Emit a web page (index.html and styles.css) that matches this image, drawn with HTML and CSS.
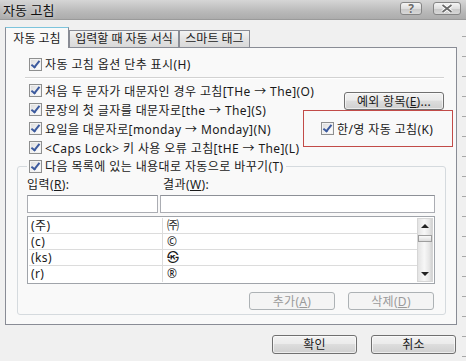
FILE: index.html
```html
<!DOCTYPE html>
<html lang="ko">
<head>
    <meta charset="UTF-8">
    <title>자동 고침</title>
    <link rel="stylesheet" href="styles.css">
</head>
<body>
<div class="window">
    <div class="titlebar">
        <span class="title">자동 고침</span>
        <div class="title-buttons">
            <span class="tb-btn tb-help">?</span>
            <span class="tb-btn tb-close">
                <svg width="12" height="9" viewBox="0 0 12 9"><path d="M1.5 1 L10.5 8 M10.5 1 L1.5 8" stroke="#fff" stroke-width="3.6"/><path d="M1.5 1 L10.5 8 M10.5 1 L1.5 8" stroke="#6a6a6a" stroke-width="1.8"/></svg>
            </span>
        </div>
    </div>

    <div class="frame">
        <div class="dialog">
            <div class="tabs">
                <div class="tab tab-1 active">자동 고침</div>
                <div class="tab tab-2">입력할 때 자동 서식</div>
                <div class="tab tab-3">스마트 태그</div>
            </div>

            <div class="panel">
                <div class="row top-row"><span class="cb"></span>자동 고침 옵션 단추 표시(H)</div>
                <div class="sep"></div>

                <div class="upper">
                    <div class="rows">
                        <div class="row"><span class="cb"></span>처음 두 문자가 대문자인 경우 고침[THe → The](O)</div>
                        <div class="row"><span class="cb"></span>문장의 첫 글자를 대문자로[the → The](S)</div>
                        <div class="row"><span class="cb"></span>요일을 대문자로[monday → Monday](N)</div>
                        <div class="row"><span class="cb"></span>&lt;Caps Lock&gt; 키 사용 오류 고침[tHE → The](L)</div>
                    </div>
                    <div class="side">
                        <button class="btn btn-except">예외 항목(<u>E</u>)...</button>
                        <div class="hanyoung">
                            <div class="row"><span class="cb"></span>한/영 자동 고침(K)</div>
                        </div>
                    </div>
                </div>

                <fieldset class="group">
                    <legend><span class="row"><span class="cb"></span>다음 목록에 있는 내용대로 자동으로 바꾸기(T)</span></legend>
                    <div class="labels">
                        <span>입력(<u>R</u>):</span>
                        <span>결과(<u>W</u>):</span>
                    </div>
                    <div class="inputs">
                        <div class="field field-in"></div>
                        <div class="field field-out"></div>
                    </div>
                    <div class="list">
                        <div class="list-rows">
                            <div class="list-row"><span class="c1">(주)</span><span class="c2">㈜</span></div>
                            <div class="list-row"><span class="c1">(c)</span><span class="c2">©</span></div>
                            <div class="list-row"><span class="c1">(ks)</span><span class="c2">㉿</span></div>
                            <div class="list-row"><span class="c1">(r)</span><span class="c2">®</span></div>
                        </div>
                        <div class="scroll">
                            <div class="arrow"><span class="tri-up"></span></div>
                            <div class="thumb"></div>
                            <div class="track"></div>
                            <div class="arrow"><span class="tri-down"></span></div>
                        </div>
                    </div>
                    <div class="actions">
                        <button class="btn btn-small" disabled>추가(<u>A</u>)</button>
                        <button class="btn btn-small" disabled>삭제(<u>D</u>)</button>
                    </div>
                </fieldset>
            </div>

            <div class="footer">
                <button class="btn btn-main">확인</button>
                <button class="btn btn-main">취소</button>
            </div>
        </div>
        <div class="edge"></div>
    </div>
</div>
</body>
</html>
```

FILE: styles.css
```css
body {
    margin: 0;
    background: #f0f0f0;
    font-family: "Noto Sans", "Noto Sans CJK KR", sans-serif;
    font-size: 12px;
    color: #1a1a1a;
}
.window {
    width: 466px;
    height: 361px;
    overflow: hidden;
}

/* title bar */
.titlebar {
    height: 20px;
    display: flex;
    justify-content: space-between;
    background: linear-gradient(#d6d6d6, #b9b9b9 60%, #acacac);
    border-bottom: 1px solid #9a9a9a;
    box-sizing: border-box;
}
.title {
    font-family: "Noto Sans CJK KR", sans-serif;
    font-size: 13px;
    line-height: 20px;
    padding-left: 3px;
    color: #101010;
    text-shadow: 0 0 4px rgba(255,255,255,0.7);
}
.title-buttons {
    display: flex;
    gap: 11px;
    margin: 2px 5px 0 0;
}
.tb-btn {
    height: 13px;
    box-sizing: border-box;
    border: 1px solid #858585;
    border-radius: 3px;
    background: linear-gradient(#f4f4f4, #dedede 50%, #c9c9c9 55%, #d8d8d8);
    display: flex;
    align-items: center;
    justify-content: center;
}
.tb-help {
    width: 22px;
    font-weight: bold;
    font-size: 12px;
    color: #6a6a6a;
    line-height: 11px;
    text-shadow: 0 0 1px #fff;
}
.tb-close {
    width: 28px;
}

.frame {
    display: flex;
}
.dialog {
    width: 462px;
}
.edge {
    width: 4px;
    height: 341px;
    background: repeating-linear-gradient(#f0f0f0 0 16px, #a8a8a8 16px 17px, #f0f0f0 17px 20px);
}

/* tabs */
.tabs {
    display: flex;
    align-items: flex-end;
    margin-top: 7px;
    padding-left: 5px;
    height: 20px;
}
.tab {
    box-sizing: border-box;
    height: 17px;
    border: 1px solid #898c95;
    border-bottom: none;
    background: linear-gradient(#f3f3f3, #e3e3e3 50%, #d9d9d9);
    text-align: center;
    line-height: 16px;
    white-space: nowrap;
}
.tab.active {
    height: 21px;
    margin-bottom: -1px;
    position: relative;
    background: #f9f9f9;
    border-top-color: #7cc4dc;
    line-height: 22px;
}
.tab-1 { width: 64px; }
.tab-2 { width: 110px; }
.tab-3 { width: 71px; }

/* panel */
.panel {
    margin-left: 5px;
    width: 452px;
    height: 278px;
    box-sizing: border-box;
    border: 1px solid #898c95;
    background: #f9f9f9;
}
.row {
    display: flex;
    align-items: center;
    gap: 3px;
    height: 19px;
    white-space: nowrap;
    letter-spacing: 0.4px;
}
.cb {
    width: 13px;
    height: 13px;
    box-sizing: border-box;
    flex: none;
    border: 1px solid #8e8f8f;
    background: linear-gradient(135deg, #d9d9d9, #f7f7f7 70%, #fff);
    box-shadow: inset 0 0 0 1px #f2f2f2;
    display: inline-flex;
    align-items: center;
    justify-content: center;
}
.cb::after {
    content: "";
    width: 3px;
    height: 7px;
    border: solid #3c5a9e;
    border-width: 0 2px 2px 0;
    transform: translate(0, -1px) rotate(38deg);
}
.top-row {
    margin: 7px 0 0 23px;
    height: 18px;
}
.sep {
    margin: 4px 12px 0 19px;
    border-top: 1px solid #d2d2d2;
    border-bottom: 1px solid #fff;
}
.upper {
    display: grid;
    grid-template-columns: 274px 150px;
    margin: 2px 0 0 23px;
}
.side {
    padding-top: 11px;
}
.hanyoung {
    height: 37px;
    box-sizing: border-box;
    border: 1px solid #c24b48;
    display: flex;
    align-items: center;
    padding-left: 17px;
}

/* buttons */
.btn {
    display: block;
    box-sizing: border-box;
    padding: 0;
    font: inherit;
    color: #1a1a1a;
    border: 1px solid #707070;
    border-radius: 3px;
    background: linear-gradient(#f2f2f2, #ebebeb 45%, #dddddd 50%, #cfcfcf);
    box-shadow: inset 0 0 0 1px rgba(255,255,255,0.6);
    line-height: 15px;
    letter-spacing: 0.3px;
}
.btn u { text-underline-offset: 1px; }
.btn-except {
    margin-left: 41px;
    width: 100px;
    height: 18px;
}
.btn-small {
    width: 86px;
    height: 18px;
}
.btn[disabled] {
    color: #9a9a9a;
    border-color: #adb2b5;
    background: #f4f4f4;
    box-shadow: none;
}
.btn-main {
    width: 85px;
    height: 19px;
    line-height: 16px;
}

/* group box */
.group {
    margin: 0 10px 0 11px;
    padding: 0 10px 4px 9px;
    border: 1px solid #d5dade;
    border-radius: 3px;
    min-width: 0;
}
.group legend {
    padding: 0 2px;
}
.group legend .row {
    height: 18px;
}
.labels {
    display: grid;
    grid-template-columns: 136px 1fr;
    height: 19px;
    line-height: 19px;
    letter-spacing: 0.4px;
}
.labels u { text-underline-offset: 1px; }
.inputs {
    display: flex;
    gap: 2px;
    margin-top: 1px;
}
.field {
    height: 18px;
    box-sizing: border-box;
    border: 1px solid #abadb3;
    border-top-color: #8d9097;
    background: #fff;
}
.field-in { width: 131px; }
.field-out { flex: 1; }

.list {
    display: flex;
    margin-top: 3px;
    height: 68px;
    box-sizing: border-box;
    border: 1px solid #a0a4aa;
    padding: 1px;
    background: #fff;
}
.list-rows {
    flex: 1;
}
.list-row {
    display: flex;
    height: 16px;
    box-sizing: border-box;
    border-bottom: 1px solid #dcdcdc;
    line-height: 15px;
    letter-spacing: 0.4px;
}
.list-row:last-child {
    border-bottom: none;
}
.c1 {
    width: 131px;
    flex: none;
    border-right: 1px solid #dcdcdc;
    padding-left: 2px;
}
.c2 {
    padding-left: 4px;
}

.scroll {
    width: 16px;
    display: flex;
    flex-direction: column;
    box-sizing: border-box;
    border: 1px solid #d6d6d6;
    background: linear-gradient(to right, #e3e3e3, #f7f7f7 45%, #e6e6e6 80%, #d2d2d2);
}
.arrow {
    height: 14px;
    display: flex;
    align-items: center;
    justify-content: center;
}
.tri-up {
    border-left: 4px solid transparent;
    border-right: 4px solid transparent;
    border-bottom: 4px solid #222;
}
.tri-down {
    border-left: 4px solid transparent;
    border-right: 4px solid transparent;
    border-top: 4px solid #222;
}
.thumb {
    height: 5px;
    margin: 2px 0 0;
    border: 1px solid #9d9d9d;
    background: linear-gradient(#fafafa, #dcdcdc);
}
.track {
    flex: 1;
}

.actions {
    display: flex;
    justify-content: flex-end;
    gap: 13px;
    margin-top: 8px;
    padding-right: 1px;
}

.footer {
    display: flex;
    justify-content: flex-end;
    gap: 14px;
    margin-top: 10px;
    padding-right: 6px;
}
```
